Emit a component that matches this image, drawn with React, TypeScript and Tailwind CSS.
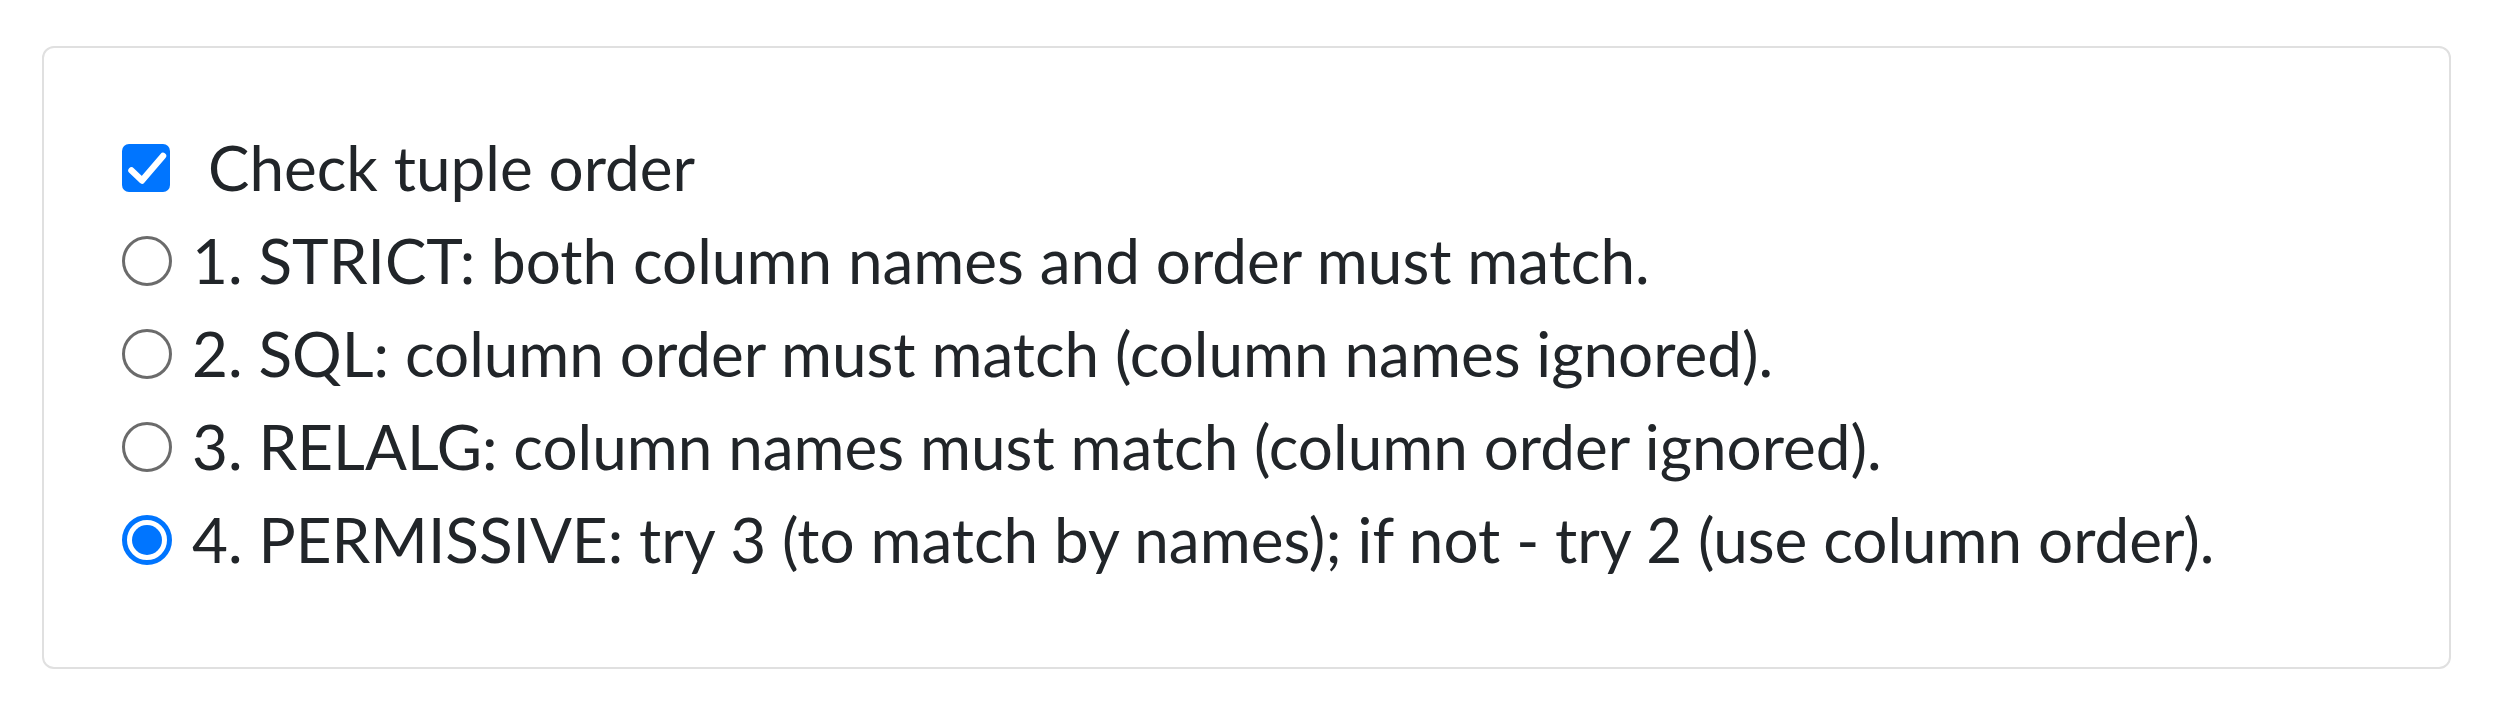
const modes = [
  { id: 'strict', label: '1. STRICT: both column names and order must match.' },
  { id: 'sql', label: '2. SQL: column order must match (column names ignored).' },
  { id: 'relalg', label: '3. RELALG: column names must match (column order ignored).' },
  { id: 'permissive', label: '4. PERMISSIVE: try 3 (to match by names); if not - try 2 (use column order).' },
];

function CheckBox() {
  return (
    <span className="flex h-[48px] w-[48px] shrink-0 items-center justify-center rounded-[7px] bg-[#0075ff]">
      <svg viewBox="0 0 48 48" className="h-[48px] w-[48px]">
        <path d="M9.5 26.5 L20 36.5 L41 12" fill="none" stroke="#fff" strokeWidth="6.5" strokeLinecap="round" strokeLinejoin="round" />
      </svg>
    </span>
  );
}

function Radio({ checked }: { checked: boolean }) {
  if (checked) {
    return (
      <span className="flex h-[50px] w-[50px] shrink-0 items-center justify-center rounded-full border-[5px] border-[#0075ff] bg-white">
        <span className="h-[30px] w-[30px] rounded-full bg-[#0075ff]" />
      </span>
    );
  }
  return <span className="h-[50px] w-[50px] shrink-0 rounded-full border-[3px] border-[#6b6b6b] bg-white" />;
}

export default function App() {
  const selected = 'permissive';

  return (
    <div className="min-h-screen bg-white pl-[42px] pr-[55px] pt-[46px]">
      <div className="rounded-[12px] border-2 border-[#e0e0e0] pb-[81px] pl-[78px] pt-[73px] font-['Lato',sans-serif] text-[62px] leading-[93px] text-[#212529]">
        <label className="flex items-center">
          <CheckBox />
          <span className="ml-[38px]">Check tuple order</span>
        </label>
        {modes.map((m) => (
          <label key={m.id} className="flex items-center">
            <Radio checked={m.id === selected} />
            <span className="ml-[20px]">{m.label}</span>
          </label>
        ))}
      </div>
    </div>
  );
}
